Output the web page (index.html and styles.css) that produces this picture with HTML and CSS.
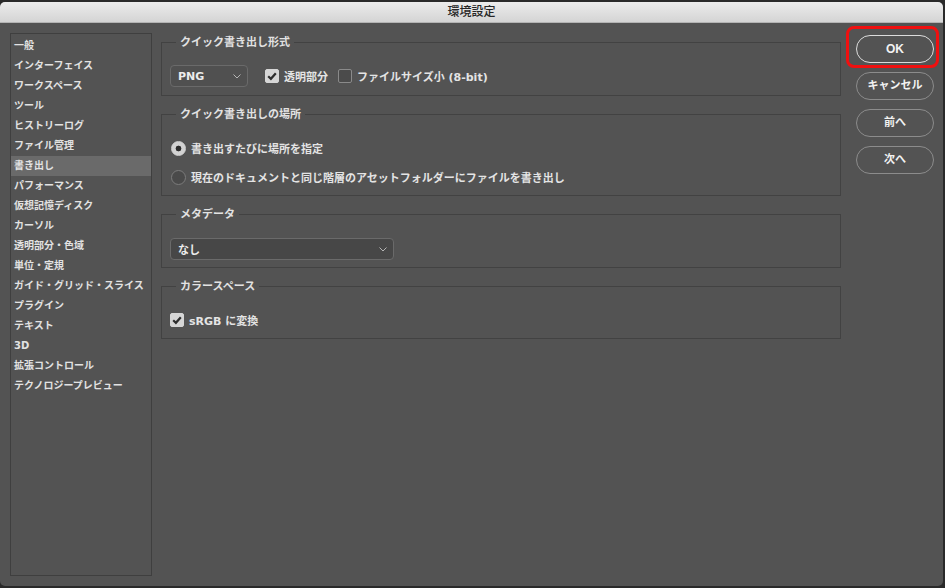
FILE: index.html
```html
<!DOCTYPE html>
<html lang="ja">
<head>
    <meta charset="UTF-8">
    <title>環境設定</title>
    <link rel="stylesheet" href="styles.css">
</head>
<body>
<div class="window">
    <div class="titlebar">環境設定</div>
    <div class="content">
        <ul class="sidebar">
            <li>一般</li>
            <li>インターフェイス</li>
            <li>ワークスペース</li>
            <li>ツール</li>
            <li>ヒストリーログ</li>
            <li>ファイル管理</li>
            <li class="active">書き出し</li>
            <li>パフォーマンス</li>
            <li>仮想記憶ディスク</li>
            <li>カーソル</li>
            <li>透明部分・色域</li>
            <li>単位・定規</li>
            <li>ガイド・グリッド・スライス</li>
            <li>プラグイン</li>
            <li>テキスト</li>
            <li>3D</li>
            <li>拡張コントロール</li>
            <li>テクノロジープレビュー</li>
        </ul>

        <div class="main">
            <fieldset class="group group_format">
                <legend>クイック書き出し形式</legend>
                <div class="row">
                    <div class="select select_format">
                        <span>PNG</span>
                        <svg class="chevron" width="8" height="5" viewBox="0 0 8 5"><path d="M0.5 0.5 L4 4 L7.5 0.5" fill="none" stroke="#b5b5b5" stroke-width="1"/></svg>
                    </div>
                    <label class="check on">
                        <span class="box"><svg width="14" height="14" viewBox="0 0 14 14"><path d="M3.2 7.2 L5.9 9.8 L10.8 4.2" fill="none" stroke="#2e2e2e" stroke-width="2.2"/></svg></span>
                        透明部分
                    </label>
                    <label class="check">
                        <span class="box"></span>
                        ファイルサイズ小 (8-bit)
                    </label>
                </div>
            </fieldset>

            <fieldset class="group">
                <legend>クイック書き出しの場所</legend>
                <label class="row radio on"><span class="dot"></span>書き出すたびに場所を指定</label>
                <label class="row radio"><span class="dot"></span>現在のドキュメントと同じ階層のアセットフォルダーにファイルを書き出し</label>
            </fieldset>

            <fieldset class="group group_meta">
                <legend>メタデータ</legend>
                <div class="row">
                    <div class="select select_meta">
                        <span>なし</span>
                        <svg class="chevron" width="8" height="5" viewBox="0 0 8 5"><path d="M0.5 0.5 L4 4 L7.5 0.5" fill="none" stroke="#b5b5b5" stroke-width="1"/></svg>
                    </div>
                </div>
            </fieldset>

            <fieldset class="group">
                <legend>カラースペース</legend>
                <div class="row">
                    <label class="check on">
                        <span class="box"><svg width="14" height="14" viewBox="0 0 14 14"><path d="M3.2 7.2 L5.9 9.8 L10.8 4.2" fill="none" stroke="#2e2e2e" stroke-width="2.2"/></svg></span>
                        sRGB に変換
                    </label>
                </div>
            </fieldset>
        </div>

        <div class="buttons">
            <div class="btn btn_ok">OK</div>
            <div class="btn">キャンセル</div>
            <div class="btn">前へ</div>
            <div class="btn">次へ</div>
        </div>
    </div>
</div>
</body>
</html>
```

FILE: styles.css
```css
* {
    margin: 0;
    padding: 0;
    box-sizing: border-box;
}
ol, ul, li {
    list-style: none;
}
body {
    background: #2a2a2a;
    font-family: "DejaVu Sans", "Noto Sans CJK JP", sans-serif;
    color: #e4e4e4;
}
.window {
    width: 943px;
    height: 584px;
    margin-top: 2px;
    background: #535353;
    border-radius: 5px;
    overflow: hidden;
}
.titlebar {
    height: 21px;
    line-height: 21px;
    text-align: center;
    font-size: 12px;
    font-weight: 500;
    color: #262626;
    background: linear-gradient(#ececec, #d4d4d4);
    border-bottom: 1px solid #b4b4b4;
}
.content {
    display: flex;
    padding: 10px 0 0 10px;
}

/* 左侧列表 */
.sidebar {
    width: 142px;
    height: 543px;
    padding-top: 2px;
    border: 1px solid #3f3f3f;
}
.sidebar li {
    height: 20px;
    line-height: 20px;
    padding-left: 3px;
    font-size: 10px;
    font-weight: bold;
    color: #e2e2e2;
    white-space: nowrap;
}
.sidebar .active {
    background: #6a6a6a;
}

/* 中间设置区 */
.main {
    width: 680px;
    margin-left: 9px;
    margin-top: 1px;
    display: flex;
    flex-direction: column;
    gap: 10px;
}
.group {
    border: 1px solid #424242;
    padding: 15px 8px 7px 8px;
    font-size: 11px;
    font-weight: bold;
}
.group_format {
    padding-bottom: 8px;
}
.group_meta {
    padding-top: 16px;
    padding-bottom: 7px;
}
.group legend {
    margin-left: 6px;
    padding: 2px 4px 0 4px;
    line-height: 14px;
    font-size: 11px;
    color: #e2e2e2;
}
.row {
    height: 22px;
    display: flex;
    align-items: center;
    gap: 10px;
    white-space: nowrap;
}
.radio + .radio {
    margin-top: 7px;
}
.select {
    height: 22px;
    display: flex;
    align-items: center;
    justify-content: space-between;
    padding: 0 6px 0 7px;
    border: 1px solid #6a6a6a;
    border-radius: 4px;
    background: #4a4a4a;
    font-size: 11px;
    color: #ececec;
}
.select_format {
    width: 78px;
    margin-right: 7px;
    background: #505050;
}
.select_meta {
    width: 224px;
    background: #474747;
}
.chevron {
    display: block;
}
.check {
    display: flex;
    align-items: center;
    gap: 5px;
}
.check .box {
    width: 14px;
    height: 14px;
    border: 1px solid #8a8a8a;
    border-radius: 2px;
    background: #4b4b4b;
}
.check.on .box {
    border-color: #d6d6d6;
    background: #d6d6d6;
}
.check .box svg {
    display: block;
    margin: -1px;
}
.radio {
    gap: 5px;
}
.radio .dot {
    width: 15px;
    height: 15px;
    border: 1px solid #7c7c7c;
    border-radius: 50%;
    background: #4a4a4a;
    margin-left: 1px;
}
.radio.on .dot {
    border-color: #d2d2d2;
    background: radial-gradient(circle, #2c2c2c 0, #2c2c2c 2.6px, #d2d2d2 3.2px);
}

/* 右侧按钮 */
.buttons {
    width: 78px;
    margin-left: 15px;
    margin-top: 2px;
    display: flex;
    flex-direction: column;
    gap: 9px;
}
.btn {
    height: 28px;
    line-height: 26px;
    text-align: center;
    border: 1px solid #8c8c8c;
    border-radius: 14px;
    font-size: 11px;
    font-weight: bold;
    color: #f2f2f2;
}
.btn_ok {
    position: relative;
    border-color: #dcdcdc;
    font-family: "Liberation Sans", sans-serif;
    font-size: 12px;
}
/* 截图上的红色标注框 */
.btn_ok::after {
    content: "";
    position: absolute;
    left: -11px;
    top: -10px;
    right: -6px;
    bottom: -6px;
    border: 3px solid #f01010;
    border-radius: 8px;
}
```
